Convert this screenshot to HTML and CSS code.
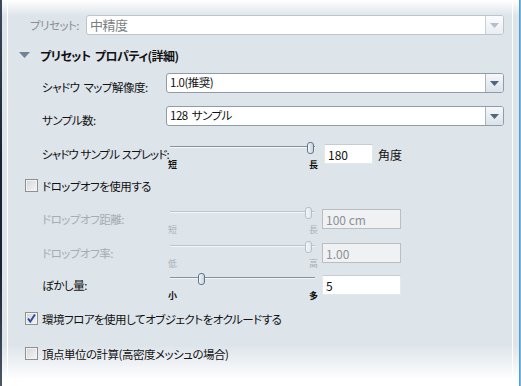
FILE: index.html
```html
<!DOCTYPE html>
<html lang="ja">
<head>
    <meta charset="UTF-8">
    <title>プリセット プロパティ</title>
    <link rel="stylesheet" href="styles.css">
</head>
<body>
    <div class="window">
        <div class="edge-left"></div>
        <div class="panel">
            <div class="row-preset">
                <span class="preset-label">プリセット:</span>
                <div class="combo combo-dim">
                    <span class="combo-text combo-text-dim">中精度</span>
                    <span class="combo-btn">
                        <svg width="9" height="5" viewBox="0 0 9 5"><polygon points="0,0 9,0 4.5,5" fill="#b3bec9"/></svg>
                    </span>
                </div>
            </div>

            <div class="section-head">
                <svg class="twisty" width="11" height="6" viewBox="0 0 11 6"><polygon points="0,0 11,0 5.5,6" fill="#6f8396"/></svg>
                <span>プリセット プロパティ(詳細)</span>
            </div>

            <div class="row row-combo row-shadow">
                <span class="label">シャドウ マップ解像度:</span>
                <div class="combo">
                    <span class="combo-text">1.0(推奨)</span>
                    <span class="combo-btn">
                        <svg width="9" height="5" viewBox="0 0 9 5"><polygon points="0,0 9,0 4.5,5" fill="#4f667c"/></svg>
                    </span>
                </div>
            </div>

            <div class="row row-combo row-samples">
                <span class="label">サンプル数:</span>
                <div class="combo">
                    <span class="combo-text">128 サンプル</span>
                    <span class="combo-btn">
                        <svg width="9" height="5" viewBox="0 0 9 5"><polygon points="0,0 9,0 4.5,5" fill="#4f667c"/></svg>
                    </span>
                </div>
            </div>

            <div class="row row-slider row-spread">
                <span class="label label-tight">シャドウ サンプル スプレッド:</span>
                <div class="slider">
                    <div class="track"></div>
                    <div class="thumb" style="left: 139px"></div>
                    <div class="ticks"><span>短</span><span>長</span></div>
                </div>
                <input class="num num-short" type="text" value="180">
                <span class="unit">角度</span>
            </div>

            <label class="check-row row-dropoff">
                <span class="box"></span>
                <span>ドロップオフを使用する</span>
            </label>

            <div class="row row-slider row-distance disabled">
                <span class="label">ドロップオフ距離:</span>
                <div class="slider">
                    <div class="track"></div>
                    <div class="thumb" style="left: 137px"></div>
                    <div class="ticks"><span>短</span><span>長</span></div>
                </div>
                <input class="num" type="text" value="100 cm" disabled>
            </div>

            <div class="row row-slider row-rate disabled">
                <span class="label">ドロップオフ率:</span>
                <div class="slider">
                    <div class="track"></div>
                    <div class="thumb" style="left: 137px"></div>
                    <div class="ticks"><span>低</span><span>高</span></div>
                </div>
                <input class="num" type="text" value="1.00" disabled>
            </div>

            <div class="row row-slider row-blur">
                <span class="label">ぼかし量:</span>
                <div class="slider">
                    <div class="track track-short"></div>
                    <div class="thumb" style="left: 30px"></div>
                    <div class="ticks"><span>小</span><span>多</span></div>
                </div>
                <input class="num" type="text" value="5">
            </div>

            <label class="check-row row-env">
                <span class="box checked">
                    <svg width="11" height="11" viewBox="0 0 11 11"><path d="M2 5.5 L4.3 8.5 L9 1.5" fill="none" stroke="#2c4fa0" stroke-width="2"/></svg>
                </span>
                <span>環境フロアを使用してオブジェクトをオクルードする</span>
            </label>

            <label class="check-row row-vertex">
                <span class="box"></span>
                <span>頂点単位の計算(高密度メッシュの場合)</span>
            </label>
        </div>
        <div class="edge-right"></div>
    </div>
</body>
</html>
```

FILE: styles.css
```css
* {
    box-sizing: border-box;
}

body {
    margin: 0;
    font-family: "Noto Sans CJK JP", "Noto Sans", sans-serif;
    font-size: 11.5px;
    letter-spacing: -0.5px;
    word-spacing: 2px;
    font-feature-settings: "palt";
    color: #111;
}

.window {
    display: flex;
    width: 521px;
    height: 386px;
    overflow: hidden;
    background: linear-gradient(#ffffff 0, #dde4ea 16px, #dde4ea 345px, #ffffff 380px);
}

.edge-left {
    width: 2px;
    margin-right: 5px;
    background: linear-gradient(#3d4a5e, #1b2434 40%, #1b2434 70%, #4b5668);
}

.edge-right {
    width: 2px;
    margin-left: 6px;
    border-left: 1px solid #4aa3d8;
    background: #7fb4d6;
}

.panel {
    flex: 1;
    display: flex;
    flex-direction: column;
    border-left: 1px solid #ffffff;
    border-right: 1px solid #ffffff;
    padding-right: 8px;
}

/* preset */
.row-preset {
    display: flex;
    height: 20px;
    margin-top: 15px;
    padding-left: 22px;
}

.preset-label {
    width: 56px;
    padding-top: 3px;
    line-height: 14px;
    color: #8b8f93;
}

.combo {
    flex: 1;
    display: flex;
    height: 20px;
    background: #ffffff;
    border: 1px solid #8f9ca8;
    border-radius: 3px;
    overflow: hidden;
}

.combo-dim {
    border-color: #bcc5ce;
}

.combo-text {
    flex: 1;
    padding-left: 3px;
    line-height: 17px;
}

.combo-text-dim {
    color: #7b7f83;
    font-size: 13px;
}

.combo-btn {
    width: 18px;
    display: flex;
    align-items: center;
    justify-content: center;
    border-left: 1px solid #aab5c0;
    background: linear-gradient(#f6f8fa, #dbe2e9);
}

.combo-dim .combo-btn {
    border-left-color: #c9d1d8;
    background: linear-gradient(#fbfcfd, #e9edf1);
}

/* section header */
.section-head {
    display: flex;
    align-items: center;
    height: 18px;
    margin-top: 11px;
    padding-left: 11px;
    font-weight: bold;
    font-size: 12px;
}

.twisty {
    margin-right: 10px;
}

/* form rows */
.row {
    display: flex;
    align-items: flex-start;
    padding-left: 34px;
}

.label {
    width: 126px;
    flex-shrink: 0;
    line-height: 14px;
    white-space: nowrap;
}

.label-tight {
    letter-spacing: -0.9px;
    word-spacing: 1px;
}

.row-combo {
    height: 20px;
}

.row-combo .label {
    width: 124px;
    padding-top: 7px;
}

.row-shadow {
    margin-top: 9px;
}

.row-samples {
    margin-top: 13px;
}

.row-slider {
    height: 26px;
}

.row-slider .label {
    padding-top: 6px;
    line-height: 12px;
}

.row-spread {
    margin-top: 16px;
}

.row-distance {
    margin-top: 15px;
}

.row-rate {
    margin-top: 8px;
}

.row-blur {
    margin-top: 6px;
}

.disabled .label {
    color: #a7adb3;
}

/* slider */
.slider {
    position: relative;
    width: 150px;
    height: 26px;
    flex-shrink: 0;
}

.track {
    position: absolute;
    left: 2px;
    right: 3px;
    top: 4px;
    height: 2px;
    border-top: 1px solid #8192a3;
    border-bottom: 1px solid #f4f6f8;
}

.thumb {
    position: absolute;
    top: 0;
    width: 7px;
    height: 12px;
    border: 1px solid #62778c;
    border-radius: 3px;
    background: linear-gradient(90deg, #f3f6f9, #c6d1dc);
}

.ticks {
    position: absolute;
    left: 0;
    right: 0;
    top: 18px;
    display: flex;
    justify-content: space-between;
    font-size: 9px;
    font-weight: bold;
    line-height: 9px;
    letter-spacing: 0;
}

.disabled .track {
    border-top-color: #bcc5ce;
}

.disabled .thumb {
    border-color: #b7c0c9;
    background: linear-gradient(90deg, #f5f7f9, #e2e7ec);
}

.disabled .ticks {
    color: #a9b0b7;
    font-weight: normal;
}

/* number inputs */
.num {
    width: 79px;
    height: 20px;
    margin: 2px 0 0 4px;
    padding: 0 0 0 3px;
    font: inherit;
    font-size: 12px;
    letter-spacing: 0;
    word-spacing: 0;
    color: #111;
    background: #ffffff;
    border: 1px solid #e3e8ec;
    border-top-color: #c4ccd4;
    outline: none;
}

.num-short {
    width: 49px;
    margin-left: 6px;
}

.num:disabled {
    color: #8d9297;
    background: #eff1f3;
    border: 1px solid #b9bec3;
}

.unit {
    margin-left: 5px;
    padding-top: 6px;
    line-height: 14px;
    font-size: 12px;
    letter-spacing: 0;
}

/* checkboxes */
.check-row {
    display: flex;
    align-items: center;
    height: 13px;
    padding-left: 17px;
    line-height: 14px;
}

.box {
    width: 13px;
    height: 13px;
    margin-right: 4px;
    display: flex;
    align-items: center;
    justify-content: center;
    border: 1px solid #8e9093;
    background: linear-gradient(135deg, #d2d4d6, #f7f7f7);
    box-shadow: inset 0 0 0 1px #f2f2f2;
}

.row-dropoff {
    margin-top: 11px;
}

.row-env {
    margin-top: 13px;
}

.row-vertex {
    margin-top: 22px;
}
```
